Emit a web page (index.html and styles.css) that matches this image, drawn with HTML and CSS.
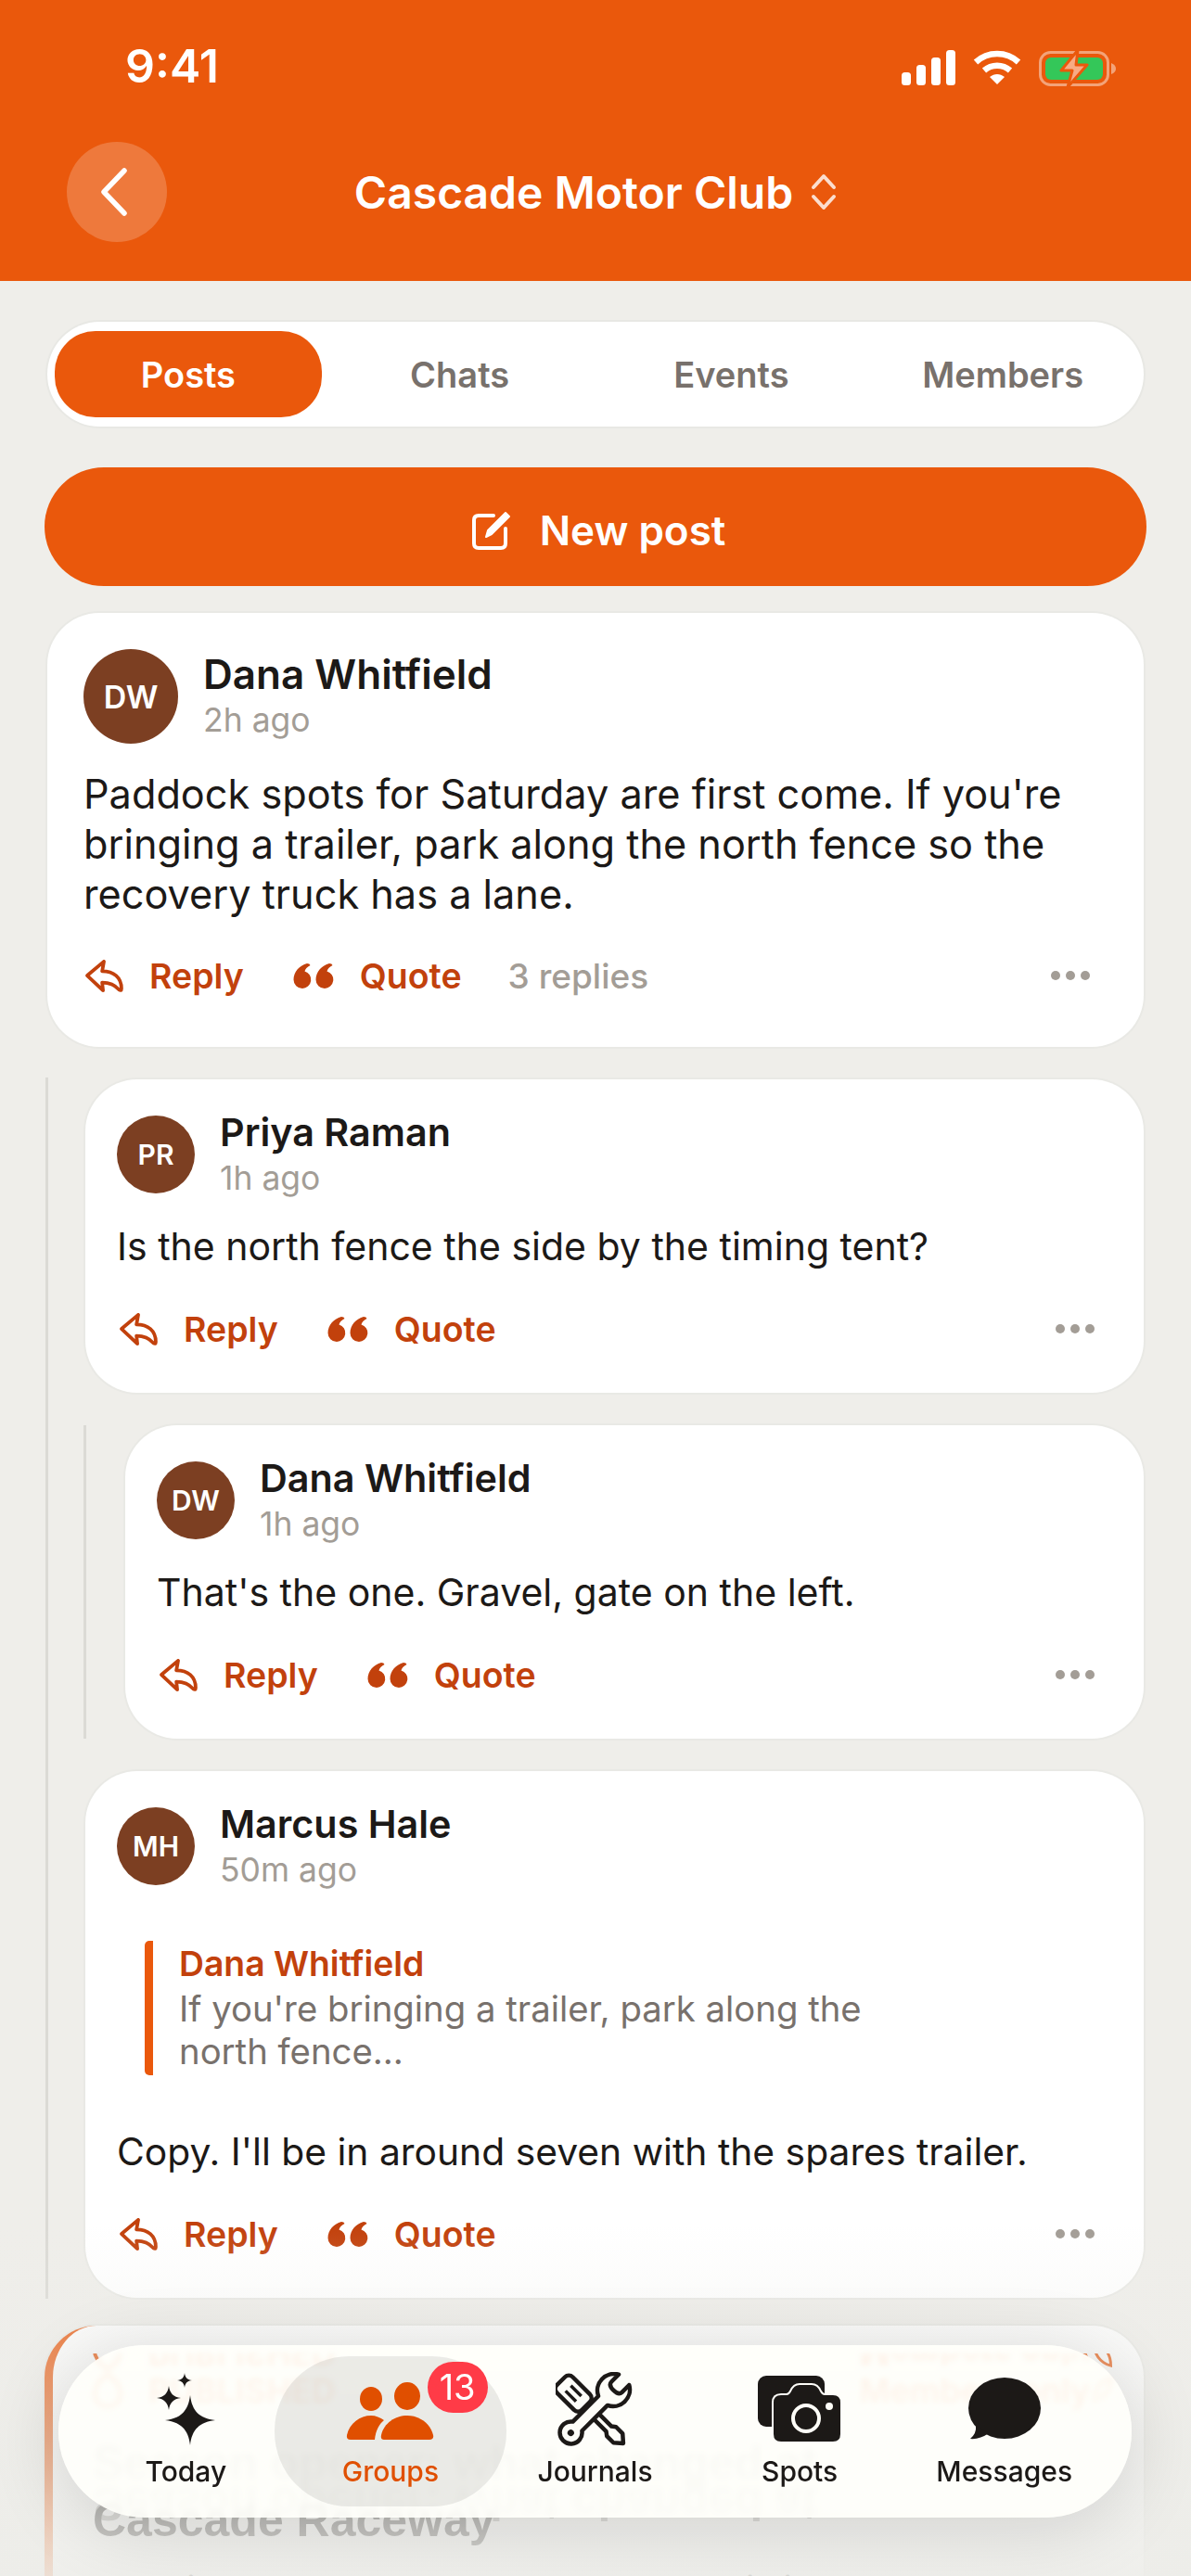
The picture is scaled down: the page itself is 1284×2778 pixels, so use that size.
FILE: index.html
```html
<!DOCTYPE html>
<html lang="en">
<head>
    <meta charset="UTF-8">
    <meta name="viewport" content="width=device-width, initial-scale=1.0">
    <title>Cascade Motor Club</title>
    <link rel="stylesheet" href="styles.css">
</head>
<body>
    <svg class="icon-defs" width="0" height="0">
        <defs>
            <symbol id="icon-reply" viewBox="0 0 43 37">
                <path d="M2 18 L21 2 L19 13 C32 13 41 20 41 33 Q41 36 38 34 C33 28 27 26 19 26 L20 35 Z" fill="none" stroke="currentColor" stroke-width="4" stroke-linejoin="round"/>
            </symbol>
            <symbol id="icon-quote" viewBox="0 0 44 27">
                <path d="M10 27 A9.5 9.5 0 0 1 0.5 17.5 C0.5 9 7 2 15 0 Q18 0 18.500 2 C15 4 13 6 12.500 8.400 A9.500 9.500 0 0 1 10 27 Z"/>
                <path d="M34 27 A9.500 9.500 0 0 1 24.500 17.500 C24.500 9 31 2 39 0 Q42 0 42.500 2 C39 4 37 6 36.500 8.400 A9.500 9.500 0 0 1 34 27 Z"/>
            </symbol>
        </defs>
    </svg>

    <div class="screen">
        <header class="top">
            <div class="status">
                <span class="status-time">9:41</span>
                <div class="status-icons">
                    <svg width="58" height="38" viewBox="0 0 58 38" fill="#fff">
                        <rect x="0" y="24" width="10" height="14" rx="3.500"/>
                        <rect x="16" y="16" width="10" height="22" rx="3.500"/>
                        <rect x="32" y="8" width="10" height="30" rx="3.500"/>
                        <rect x="48" y="0" width="10" height="38" rx="3.500"/>
                    </svg>
                    <svg width="52" height="38" viewBox="0 0 52 38" fill="none" stroke="#fff" stroke-width="6.500">
                        <path d="M3 13 C16 1 36 1 49 13"/>
                        <path d="M12 22 C20 15 32 15 40 22"/>
                        <path d="M18 29 L26 37 L34 29 C29 25 23 25 18 29 Z" fill="#fff" stroke="none"/>
                    </svg>
                    <svg width="84" height="40" viewBox="0 0 84 40">
                        <rect x="1.500" y="2.500" width="73" height="35" rx="11" fill="none" stroke="#fff" stroke-opacity=".45" stroke-width="3"/>
                        <rect x="7" y="8" width="62" height="24" rx="6" fill="#34c759"/>
                        <path d="M78 14 Q83 16 83 20 Q83 24 78 26 Z" fill="#fff" fill-opacity=".45"/>
                        <path d="M42 0 L24 22 H36 L31 40 L52 16 H40 Z" fill="#f8ab85" stroke="#ea580c" stroke-width="3" stroke-linejoin="round"/>
                    </svg>
                </div>
            </div>
            <div class="top-bar">
                <button class="back-btn">
                    <svg width="32" height="52" viewBox="0 0 32 52" fill="none" stroke="#fff" stroke-width="5.500" stroke-linecap="round" stroke-linejoin="round"><path d="M27 3 L5 26 L27 49"/></svg>
                </button>
                <div class="club-title">
                    <span>Cascade Motor Club</span>
                    <svg width="28" height="40" viewBox="0 0 28 40" fill="none" stroke="#fff" stroke-opacity=".8" stroke-width="4" stroke-linecap="round" stroke-linejoin="round"><path d="M3 15 L14 3 L25 15"/><path d="M3 25 L14 37 L25 25"/></svg>
                </div>
            </div>
        </header>

        <main class="feed">
            <nav class="tabs">
                <button class="tab active">Posts</button>
                <button class="tab">Chats</button>
                <button class="tab">Events</button>
                <button class="tab">Members</button>
            </nav>

            <button class="new-post">
                <svg width="44" height="44" viewBox="0 0 44 44" fill="none" stroke="#fff" stroke-width="4" stroke-linecap="round" stroke-linejoin="round">
                    <path d="M24 6 H8 Q3 6 3 11 V36 Q3 41 8 41 H32 Q37 41 37 36 V20"/>
                    <path d="M16 29 L18 22 L37 3 L41 7 L22 26 Z" fill="#fff" stroke-width="2"/>
                </svg>
                <span>New post</span>
            </button>

            <article class="card">
                <div class="post-head">
                    <div class="avatar">DW</div>
                    <div>
                        <div class="author">Dana Whitfield</div>
                        <div class="when">2h ago</div>
                    </div>
                </div>
                <p class="post-text">Paddock spots for Saturday are first come. If you're bringing a trailer, park along the north fence so the recovery truck has a lane.</p>
                <div class="actions">
                    <a class="action"><svg class="ic-reply"><use href="#icon-reply"/></svg>Reply</a>
                    <a class="action"><svg class="ic-quote"><use href="#icon-quote"/></svg>Quote</a>
                    <span class="reply-count">3 replies</span>
                    <span class="more"><i></i><i></i><i></i></span>
                </div>
            </article>

            <section class="thread">
                <article class="card card-reply">
                    <div class="post-head">
                        <div class="avatar">PR</div>
                        <div>
                            <div class="author">Priya Raman</div>
                            <div class="when">1h ago</div>
                        </div>
                    </div>
                    <p class="post-text">Is the north fence the side by the timing tent?</p>
                    <div class="actions">
                        <a class="action"><svg class="ic-reply"><use href="#icon-reply"/></svg>Reply</a>
                        <a class="action"><svg class="ic-quote"><use href="#icon-quote"/></svg>Quote</a>
                        <span class="more"><i></i><i></i><i></i></span>
                    </div>
                </article>

                <div class="thread-nested">
                    <article class="card card-reply">
                        <div class="post-head">
                            <div class="avatar">DW</div>
                            <div>
                                <div class="author">Dana Whitfield</div>
                                <div class="when">1h ago</div>
                            </div>
                        </div>
                        <p class="post-text">That's the one. Gravel, gate on the left.</p>
                        <div class="actions">
                            <a class="action"><svg class="ic-reply"><use href="#icon-reply"/></svg>Reply</a>
                            <a class="action"><svg class="ic-quote"><use href="#icon-quote"/></svg>Quote</a>
                            <span class="more"><i></i><i></i><i></i></span>
                        </div>
                    </article>
                </div>

                <article class="card card-reply">
                    <div class="post-head">
                        <div class="avatar">MH</div>
                        <div>
                            <div class="author">Marcus Hale</div>
                            <div class="when">50m ago</div>
                        </div>
                    </div>
                    <blockquote class="quoted">
                        <div class="quoted-author">Dana Whitfield</div>
                        <div class="quoted-text">If you're bringing a trailer, park along the<br>north fence...</div>
                    </blockquote>
                    <p class="post-text">Copy. I'll be in around seven with the spares trailer.</p>
                    <div class="actions">
                        <a class="action"><svg class="ic-reply"><use href="#icon-reply"/></svg>Reply</a>
                        <a class="action"><svg class="ic-quote"><use href="#icon-quote"/></svg>Quote</a>
                        <span class="more"><i></i><i></i><i></i></span>
                    </div>
                </article>
            </section>

            <article class="card card-journal">
                <div class="journal-meta">
                    <span class="pill">
                        <svg width="32" height="38" viewBox="0 0 32 38" fill="none" stroke="currentColor" stroke-width="4"><path d="M16 2 C26 8 30 16 30 22 C30 31 24 36 16 36 C8 36 2 31 2 22 C2 16 6 8 16 2 Z"/></svg>
                        PUBLISHED
                    </span>
                    <span class="pill pill-members">
                        Members only
                        <svg width="22" height="30" viewBox="0 0 30 40" fill="none" stroke="currentColor" stroke-width="4"><path d="M4 38 C2 20 12 6 28 2 C28 16 22 28 10 32"/></svg>
                    </span>
                </div>
                <h2 class="journal-title"><span class="title-line">Season opener: what changed at</span> Cascade Raceway</h2>
                <p class="journal-text">Gate times, paddock layout and the new timing tent.</p>
            </article>
        </main>

        <div class="veil"></div>

        <nav class="dock">
            <a class="dock-item">
                <svg width="80" height="80" viewBox="0 0 80 80" fill="#1c1917">
                    <path d="M45 25 C47 42 55 50 72 52 C55 54 47 62 45 79 C43 62 35 54 18 52 C35 50 43 42 45 25 Z"/>
                    <path d="M22 15 C23 23 27 27 35 28 C27 29 23 33 22 41 C21 33 17 29 9 28 C17 27 21 23 22 15 Z"/>
                    <path d="M39 1 C39.500 6 42 8.500 47 9 C42 9.500 39.500 12 39 17 C38.500 12 36 9.500 31 9 C36 8.500 38.500 6 39 1 Z"/>
                </svg>
                <span>Today</span>
            </a>
            <a class="dock-item active">
                <svg width="96" height="80" viewBox="0 0 96 80" fill="#e04f00">
                    <g transform="translate(0 11)">
                        <ellipse cx="27" cy="18" rx="12" ry="13"/>
                        <ellipse cx="66" cy="15" rx="14" ry="15"/>
                        <path d="M41 62 Q37 62 38 57 C41 44 53 36 66 36 C79 36 91 44 94 57 Q95 62 90 62 Z"/>
                        <path d="M5 62 Q0 62 1 57 C4 44 15 36 27 36 C32 36 37 38 41 41 C36 45 32 52 31 62 Z"/>
                    </g>
                </svg>
                <span>Groups</span>
                <b class="badge">13</b>
            </a>
            <a class="dock-item">
                <svg width="84" height="80" viewBox="0 0 84 80">
                    <g transform="translate(39 43)" fill="#fdfdf8" stroke="#1c1917" stroke-width="4.500" stroke-linejoin="round">
                        <g transform="rotate(-45)">
                            <path d="M-4 -10 V26 L-7 30 V40 L0 48 L7 40 V30 L4 26 V-10 Z"/>
                            <rect x="-12" y="-47" width="24" height="38" rx="6"/>
                            <path d="M-4 -36 V-20 M4 -36 V-20" fill="none" stroke-width="3.500"/>
                        </g>
                        <g transform="rotate(45)">
                            <path d="M-7 -17 V22 A12 12 0 1 0 7 22 V-17 A18 18 0 0 0 8 -49 V-38 Q8 -33 0 -33 Q-8 -33 -8 -38 V-49 A18 18 0 0 0 -7 -17 Z"/>
                            <circle cx="0" cy="32" r="3.500" fill="#1c1917" stroke="none"/>
                        </g>
                    </g>
                </svg>
                <span>Journals</span>
            </a>
            <a class="dock-item">
                <svg width="94" height="80" viewBox="0 0 94 76">
                    <rect x="2" y="2" width="72" height="55" rx="9" fill="#1c1917"/>
                    <path d="M27 23 H33 Q36 23 38 19 Q41 12 47 12 H60 Q66 12 69 19 Q71 23 74 23 H83 Q91 23 91 31 V65 Q91 73 83 73 H27 Q19 73 19 65 V31 Q19 23 27 23 Z" fill="#1c1917" stroke="#fdfdf8" stroke-width="4" paint-order="stroke"/>
                    <circle cx="54" cy="48" r="14" fill="#1c1917" stroke="#fdfdf8" stroke-width="4"/>
                    <circle cx="79" cy="35" r="4" fill="#fdfdf8"/>
                </svg>
                <span>Spots</span>
            </a>
            <a class="dock-item">
                <svg width="84" height="80" viewBox="0 0 84 80" fill="#1c1917">
                    <g transform="translate(-1 6)">
                        <ellipse cx="43" cy="33" rx="39" ry="33"/>
                        <path d="M12 52 Q13 60 6 66 Q16 67 26 60 Z"/>
                    </g>
                </svg>
                <span>Messages</span>
            </a>
        </nav>
    </div>
</body>
</html>
```

FILE: styles.css
```css
* {
    box-sizing: border-box;
}
body {
    margin: 0;
    font-family: Inter, "Noto Sans", sans-serif;
    color: #1c1917;
    background: #efeeea;
}
button {
    font: inherit;
    border: none;
    cursor: pointer;
}
.icon-defs {
    position: absolute;
}
.screen {
    position: relative;
    width: 1284px;
    height: 2778px;
    overflow: hidden;
    background: #efeeea;
}

/* orange header */
.top {
    height: 303px;
    background: #ea580c;
    color: #fff;
}
.status {
    height: 153px;
    padding: 43px 80px 0 135px;
    display: flex;
    justify-content: space-between;
    align-items: flex-start;
}
.status-time {
    font-size: 50px;
    line-height: 56px;
    font-weight: 600;
}
.status-icons {
    display: flex;
    align-items: flex-start;
    gap: 19px;
    padding-top: 11px;
}
.top-bar {
    position: relative;
    display: flex;
    justify-content: center;
}
.back-btn {
    position: absolute;
    left: 72px;
    top: 0;
    width: 108px;
    height: 108px;
    border-radius: 50%;
    background: rgba(255, 255, 255, 0.2);
    display: flex;
    align-items: center;
    justify-content: center;
    padding: 0 6px 0 0;
}
.club-title {
    height: 108px;
    display: flex;
    align-items: center;
    gap: 19px;
    font-size: 48px;
    font-weight: 600;
}

/* feed */
.feed {
    padding: 44px 51px 0;
}
.tabs {
    height: 113px;
    padding: 10px 8px;
    display: grid;
    grid-template-columns: repeat(4, 1fr);
    gap: 5px;
    background: #fff;
    box-shadow: 0 0 0 2px #e8e8e4;
    border-radius: 57px;
}
.tab {
    background: none;
    border-radius: 44px;
    padding: 0;
    color: #78716c;
    font-size: 38px;
    font-weight: 600;
}
.tab.active {
    background: #ea580c;
    color: #fff;
}
.new-post {
    width: 1188px;
    height: 128px;
    margin: 44px 0 29px -3px;
    padding: 7px 0 0 6px;
    border-radius: 64px;
    background: #ea580c;
    color: #fff;
    display: flex;
    align-items: center;
    justify-content: center;
    gap: 30px;
    font-size: 44px;
    font-weight: 600;
}
.card {
    background: #fff;
    box-shadow: 0 0 0 2px #e9e9e5;
    border-radius: 56px;
    padding: 39px 39px 0;
    height: 468px;
}
.post-head {
    display: flex;
    align-items: center;
    gap: 27px;
    height: 102px;
}
.avatar {
    width: 102px;
    height: 102px;
    flex: none;
    border-radius: 50%;
    background: #7c3f22;
    color: #fff;
    display: flex;
    align-items: center;
    justify-content: center;
    font-size: 34px;
    font-weight: 600;
}
.author {
    font-size: 44px;
    line-height: 50px;
    font-weight: 600;
}
.when {
    margin-top: 2px;
    font-size: 35.500px;
    line-height: 46px;
    color: #a39d96;
}
.post-text {
    margin: 27px 0 0;
    font-size: 43.250px;
    line-height: 54px;
}
.actions {
    display: flex;
    align-items: center;
    height: 60px;
    margin: 31px 0 0 2px;
    font-size: 37.500px;
    font-weight: 600;
}
.action {
    display: flex;
    align-items: center;
    color: #c2410c;
    margin-right: 53px;
}
.ic-reply {
    width: 41px;
    height: 35px;
    margin-right: 28px;
}
.ic-quote {
    width: 44px;
    height: 27px;
    fill: currentColor;
    margin-right: 28px;
}
.reply-count {
    margin-left: -3px;
    color: #a39d96;
    font-size: 37px;
    font-weight: 500;
}
.more {
    margin-left: auto;
    margin-right: 19px;
    display: flex;
    gap: 6px;
}
.more i {
    width: 10px;
    height: 10px;
    border-radius: 50%;
    background: #a39d96;
}

/* replies */
.thread {
    margin: 33px 0 0 -2px;
    padding: 2px 0 0 40px;
    border-left: 3px solid #dbdad5;
    height: 1317px;
    display: flex;
    flex-direction: column;
    gap: 35px;
}
.thread-nested {
    margin-left: -2px;
    border-left: 3px solid #dbdad5;
    padding-left: 42px;
}
.card-reply {
    height: auto;
    padding: 39px 34px 39px;
}
.card-reply .post-head {
    height: 84px;
}
.card-reply .avatar {
    width: 84px;
    height: 84px;
    font-size: 30px;
}
.card-reply .author {
    font-size: 41.300px;
}
.card-reply .post-text {
    margin-top: 30px;
    font-size: 41px;
}
.card-reply .actions {
    margin-top: 32px;
    margin-left: 3px;
}
.quoted {
    margin: 60px 0 0 30px;
    height: 145px;
    padding: 0 0 0 28px;
    border-left: 9px solid #ea580c;
    border-radius: 5px;
}
.quoted-author {
    font-size: 37.300px;
    line-height: 50px;
    font-weight: 600;
    color: #c2410c;
}
.quoted-text {
    font-size: 38.300px;
    line-height: 46px;
    color: #78716c;
}
.card-reply .quoted + .post-text {
    margin-top: 55px;
    font-size: 40.800px;
}

/* journal card, runs under the dock */
.card-journal {
    margin: 29px 0 0 -3px;
    height: 500px;
    padding: 50px 0 0 43px;
    border-left: 9px solid #ea580c;
}
.journal-meta {
    display: flex;
    justify-content: space-between;
    padding-right: 34px;
}
.pill {
    display: flex;
    align-items: center;
    gap: 28px;
    height: 40px;
    color: #ea580c;
    font-size: 36px;
    font-weight: 600;
    /* only the top half shows in the glass */
    -webkit-box-reflect: above 0 linear-gradient(to bottom, #000 50%, transparent 50%);
}
.pill-members {
    gap: 2px;
}
.journal-title {
    margin: 27px 0 0;
    width: 900px;
    font-family: "Liberation Sans", sans-serif;
    font-size: 50px;
    line-height: 62px;
    font-weight: 700;
}
.title-line {
    display: block;
    opacity: 0.45;
    -webkit-box-reflect: below -18px;
}
.journal-text {
    margin: 20px 0 0;
    font-size: 36px;
    line-height: 44px;
}

/* fade behind the dock */
.veil {
    position: absolute;
    left: 0;
    right: 0;
    bottom: 0;
    height: 378px;
    background: linear-gradient(to bottom, rgba(237, 237, 233, 0), rgba(237, 237, 233, 0.37) 37%, rgba(237, 237, 233, 0.9));
}

/* floating tab bar */
.dock {
    position: absolute;
    left: 63px;
    top: 2529px;
    width: 1157px;
    height: 186px;
    padding: 12px 27px;
    display: grid;
    grid-template-columns: repeat(5, 1fr);
    border-radius: 93px;
    background: rgba(255, 255, 250, 0.89);
    backdrop-filter: blur(3px);
    box-shadow: 0 10px 80px rgba(0, 0, 0, 0.14);
}
.dock-item {
    position: relative;
    display: flex;
    flex-direction: column;
    align-items: center;
    padding-top: 17px;
    font-size: 30px;
    line-height: 40px;
    font-weight: 500;
    color: #1c1917;
}
.dock-item svg {
    display: block;
    margin-bottom: 7px;
}
.dock-item.active {
    margin: 0 -15px;
    border-radius: 80px;
    background: rgba(0, 0, 0, 0.08);
    color: #e04f00;
}
.badge {
    position: absolute;
    left: 165px;
    top: 6px;
    width: 65px;
    height: 55px;
    border-radius: 28px;
    background: #ff3b47;
    color: #fff;
    font-size: 38px;
    line-height: 55px;
    font-weight: 400;
    text-align: center;
}
```
